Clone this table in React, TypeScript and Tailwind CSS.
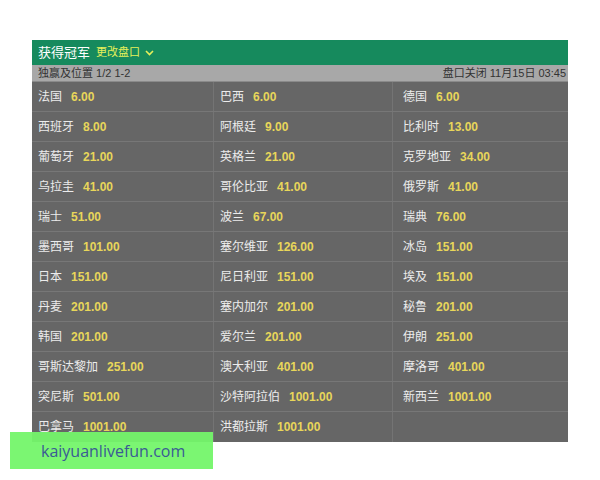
import React from "react";

const rows: [string, string][][] = [
  [["法国", "6.00"], ["巴西", "6.00"], ["德国", "6.00"]],
  [["西班牙", "8.00"], ["阿根廷", "9.00"], ["比利时", "13.00"]],
  [["葡萄牙", "21.00"], ["英格兰", "21.00"], ["克罗地亚", "34.00"]],
  [["乌拉圭", "41.00"], ["哥伦比亚", "41.00"], ["俄罗斯", "41.00"]],
  [["瑞士", "51.00"], ["波兰", "67.00"], ["瑞典", "76.00"]],
  [["墨西哥", "101.00"], ["塞尔维亚", "126.00"], ["冰岛", "151.00"]],
  [["日本", "151.00"], ["尼日利亚", "151.00"], ["埃及", "151.00"]],
  [["丹麦", "201.00"], ["塞内加尔", "201.00"], ["秘鲁", "201.00"]],
  [["韩国", "201.00"], ["爱尔兰", "201.00"], ["伊朗", "251.00"]],
  [["哥斯达黎加", "251.00"], ["澳大利亚", "401.00"], ["摩洛哥", "401.00"]],
  [["突尼斯", "501.00"], ["沙特阿拉伯", "1001.00"], ["新西兰", "1001.00"]],
  [["巴拿马", "1001.00"], ["洪都拉斯", "1001.00"], ["", ""]],
];

const font = { fontFamily: '"Liberation Sans", "Noto Sans CJK SC", sans-serif' };

export default function App() {
  return (
    <div className="relative h-[480px] w-[600px] bg-white" style={font}>
      <div className="pl-[32px] pt-[40px]">
        <div className="w-[536px]">
          <div className="flex h-[25px] items-center gap-[6px] bg-[#168a5d] pl-[6px]">
            <span className="text-[13px] text-white">获得冠军</span>
            <span className="flex items-center gap-[5px] text-[11px] text-[#e6f05a]">
              更改盘口
              <svg width="9" height="6" viewBox="0 0 9 6" fill="none">
                <path d="M1 1l3.5 3.5L8 1" stroke="#e6f05a" strokeWidth="1.6" />
              </svg>
            </span>
          </div>
          <div className="flex h-[16px] items-center justify-between bg-[#a8a8a8] pl-[6px] pr-[2px] text-[11px] leading-none text-[#333]">
            <span>独赢及位置 1/2 1-2</span>
            <span>盘口关闭 11月15日 03:45</span>
          </div>
          <div className="border-t border-[#8a8a8a] bg-[#666666]">
            {rows.map((row, i) => (
              <div
                key={i}
                className="grid h-[30px] grid-cols-[182px_179px_175px] border-b border-[#777777] last:border-b-0"
              >
                {row.map(([name, odds], j) => (
                  <div
                    key={j}
                    className={`flex items-center gap-[9px] pl-[6px] text-[12px] ${
                      j < 2 ? "border-r border-[#747474]" : "pl-[10px]"
                    }`}
                  >
                    <span className="text-[#ececec]">{name}</span>
                    <span className="font-bold text-[#e8d65a]">{odds}</span>
                  </div>
                ))}
              </div>
            ))}
          </div>
        </div>
      </div>
      <div className="absolute left-[10px] top-[432px] flex h-[37px] w-[203px] items-center bg-[#74f56a]/95 pl-[31px]">
        <span className="text-[16px] text-[#3a5b95]" style={{ fontFamily: '"Open Sans", "Liberation Sans", sans-serif' }}>
          kaiyuanlivefun.com
        </span>
      </div>
    </div>
  );
}
